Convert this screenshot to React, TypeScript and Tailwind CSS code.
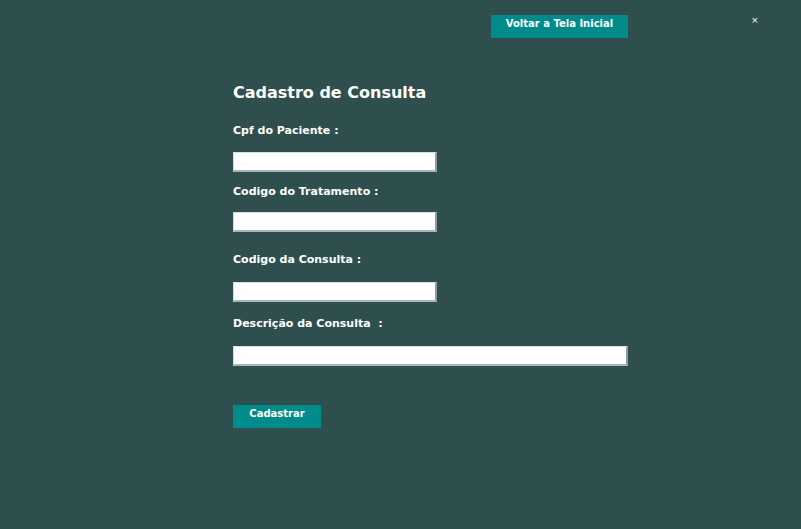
const FONT = { fontFamily: '"DejaVu Sans", Verdana, sans-serif' };

function Field({ label, wide, gap }: { label: string; wide?: boolean; gap: string }) {
  return (
    <div className="flex flex-col">
      <span className="text-[11px] leading-[13px] font-bold text-white whitespace-pre">{label}</span>
      <input
        type="text"
        className={`${gap} h-[20px] ${wide ? 'w-[395px]' : 'w-[204px]'} bg-white border border-t-[#d6dde2] border-l-[#d6dde2] border-r-2 border-b-2 border-r-[#8e9ba5] border-b-[#a9b4bc] outline-none`}
      />
    </div>
  );
}

export default function App() {
  return (
    <div className="w-[801px] h-[529px] bg-[#2f4f4f] overflow-hidden" style={FONT}>
      <div className="flex items-start pt-[15px]">
        <button
          type="button"
          className="ml-[491px] w-[137px] h-[23px] bg-[#008b8b] text-white text-[10px] leading-[13px] font-bold pt-[2px] flex justify-center items-start"
        >
          Voltar a Tela Inicial
        </button>
        <span className="ml-[123px] mt-[1px] text-white text-[9px] leading-[9px]">×</span>
      </div>

      <div className="ml-[233px] flex flex-col">
        <h1 className="mt-[45px] text-[16px] leading-[20px] font-bold text-white">Cadastro de Consulta</h1>
        <div className="mt-[21px]">
          <Field label="Cpf do Paciente :" gap="mt-[15px]" />
        </div>
        <div className="mt-[13px]">
          <Field label="Codigo do Tratamento :" gap="mt-[14px]" />
        </div>
        <div className="mt-[21px]">
          <Field label="Codigo da Consulta :" gap="mt-[16px]" />
        </div>
        <div className="mt-[15px]">
          <Field label="Descrição da Consulta  :" gap="mt-[16px]" wide />
        </div>
        <button
          type="button"
          className="mt-[39px] w-[88px] h-[23px] bg-[#008b8b] text-white text-[10px] leading-[13px] font-bold pt-[2px] flex justify-center items-start"
        >
          Cadastrar
        </button>
      </div>
    </div>
  );
}
